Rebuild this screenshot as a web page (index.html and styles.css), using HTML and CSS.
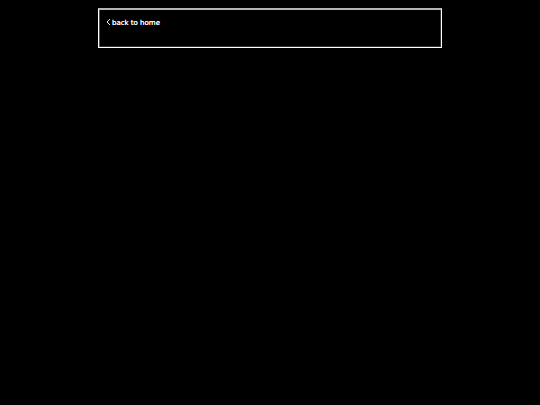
FILE: index.html
```html
<!DOCTYPE html>
<html lang="en">
<head>
  <meta charset="UTF-8" />
  <meta name="viewport" content="width=device-width, initial-scale=1" />
  <title>home</title>
  <link rel="stylesheet" href="styles.css">
</head>
<body>
<div class="container">
  <a class="back" href="/">
    <svg class="chevron" viewBox="0 0 5 10" aria-hidden="true">
      <path d="M4 2 L1 5 L4 8" />
    </svg>
    <span>back to home</span>
  </a>
</div>
</body>
</html>
```

FILE: styles.css
```css
body {
  margin: 8px;
  background-color: #000;
  color: #fff;
  font-family: "DejaVu Sans", sans-serif;
}
.container {
  max-width: 344px;
  min-height: 40px;
  margin: 0 auto;
  padding: 7px;
  box-sizing: border-box;
  border: 1px solid #fff;
  border-top: 2px solid #b5b5b5;
  /* soft edge on the sides and bottom */
  box-shadow: 0 1px #333, inset 1px 0 #555, inset -1px -1px #333;
}
.back {
  display: inline-flex;
  align-items: flex-start;
  gap: 1px;
  color: #fff;
  font-size: 7px;
  line-height: 12px;
  text-decoration: none;
  text-shadow: 0 0 #fff;
  vertical-align: top;
}
/* thin arrow before the link text */
.chevron {
  width: 5px;
  height: 10px;
  fill: none;
  stroke: #eee;
  stroke-width: 1;
}
```
